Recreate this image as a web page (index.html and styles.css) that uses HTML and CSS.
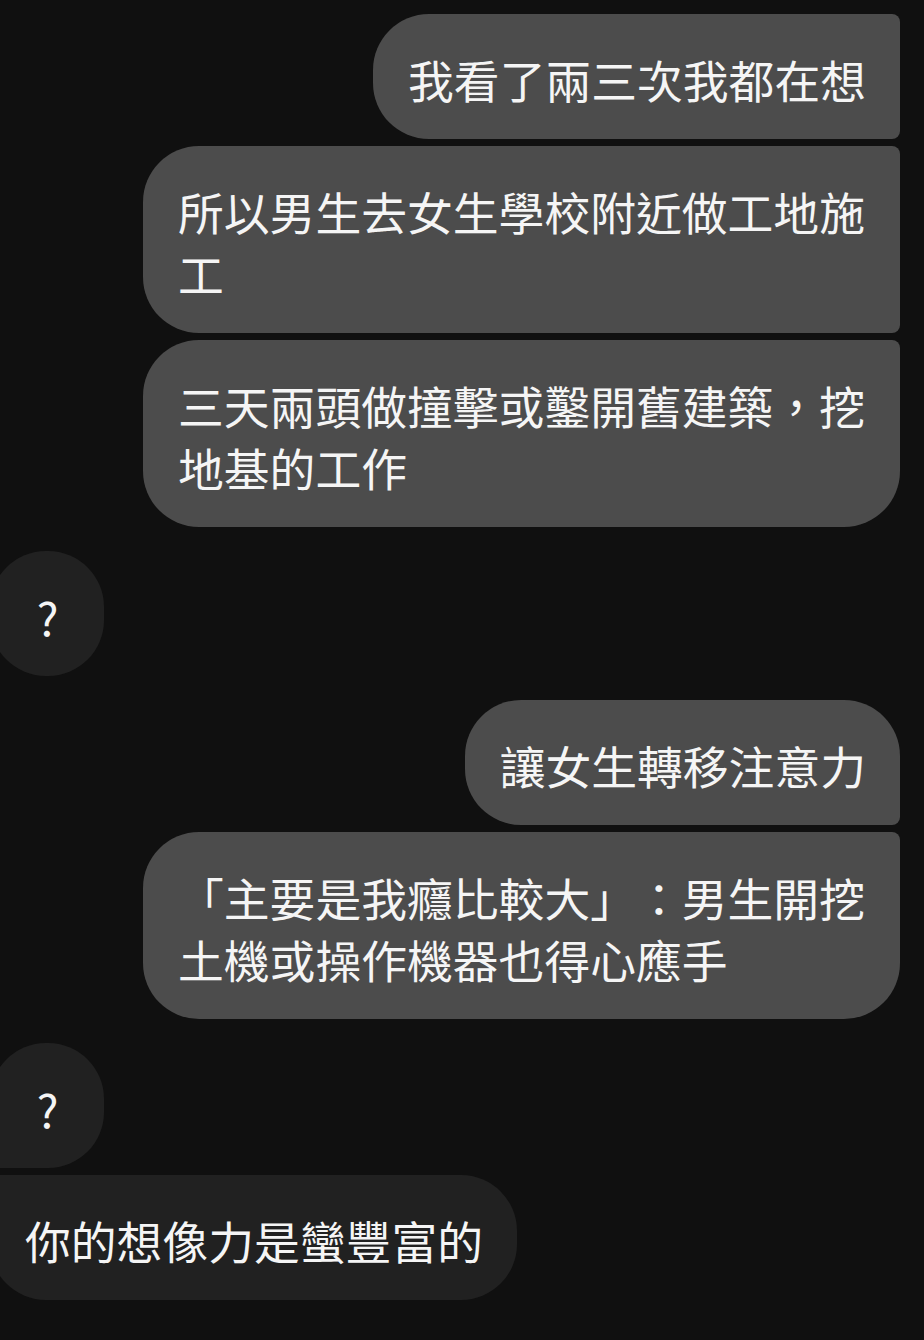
FILE: index.html
```html
<!DOCTYPE html>
<html lang="zh-Hant">
<head>
    <meta charset="UTF-8">
    <meta name="viewport" content="width=device-width, initial-scale=1.0">
    <title>訊息</title>
    <link rel="stylesheet" href="styles.css">
</head>
<body>
    <div class="thread">
        <div class="group sent">
            <div class="bubble top">我看了兩三次我都在想</div>
            <div class="bubble mid">所以男生去女生學校附近做工地施工</div>
            <div class="bubble last">三天兩頭做撞擊或鑿開舊建築，挖地基的工作</div>
        </div>

        <div class="group received">
            <div class="bubble single short">?</div>
        </div>

        <div class="group sent">
            <div class="bubble first">讓女生轉移注意力</div>
            <div class="bubble last">「主要是我癮比較大」：男生開挖土機或操作機器也得心應手</div>
        </div>

        <div class="group received">
            <div class="bubble first short">?</div>
            <div class="bubble last">你的想像力是蠻豐富的</div>
        </div>
    </div>
</body>
</html>
```

FILE: styles.css
```css
body {
    margin: 0;
    background-color: #101010;
    font-family: "Noto Sans CJK TC", "Noto Sans", sans-serif;
    color: #f5f5f5;
}
.thread {
    display: flex;
    flex-direction: column;
    gap: 24px;
    padding: 14px 24px 0 0;
}
.group {
    display: flex;
    flex-direction: column;
    gap: 7px;
}
.group.sent {
    align-items: flex-end;
}
.group.received {
    align-items: flex-start;
    margin-left: -10px;
}
.bubble {
    max-width: 757px;
    box-sizing: border-box;
    padding: 34px 34px 29px 35px;
    font-size: 45.8px;
    line-height: 62px;
    text-spacing-trim: space-all;
    border-radius: 56px;
}
.bubble.short {
    min-width: 114px;
    text-align: center;
}
.sent .bubble {
    background-color: #4c4c4c;
}
.received .bubble {
    background-color: #212121;
}

/* corner shapes inside a group */
.sent .top,
.sent .mid {
    border-top-right-radius: 8px;
    border-bottom-right-radius: 8px;
}
.sent .first {
    border-bottom-right-radius: 8px;
}
.sent .last {
    border-top-right-radius: 8px;
}
.received .first {
    border-bottom-left-radius: 8px;
}
.received .last {
    border-top-left-radius: 8px;
}
```
